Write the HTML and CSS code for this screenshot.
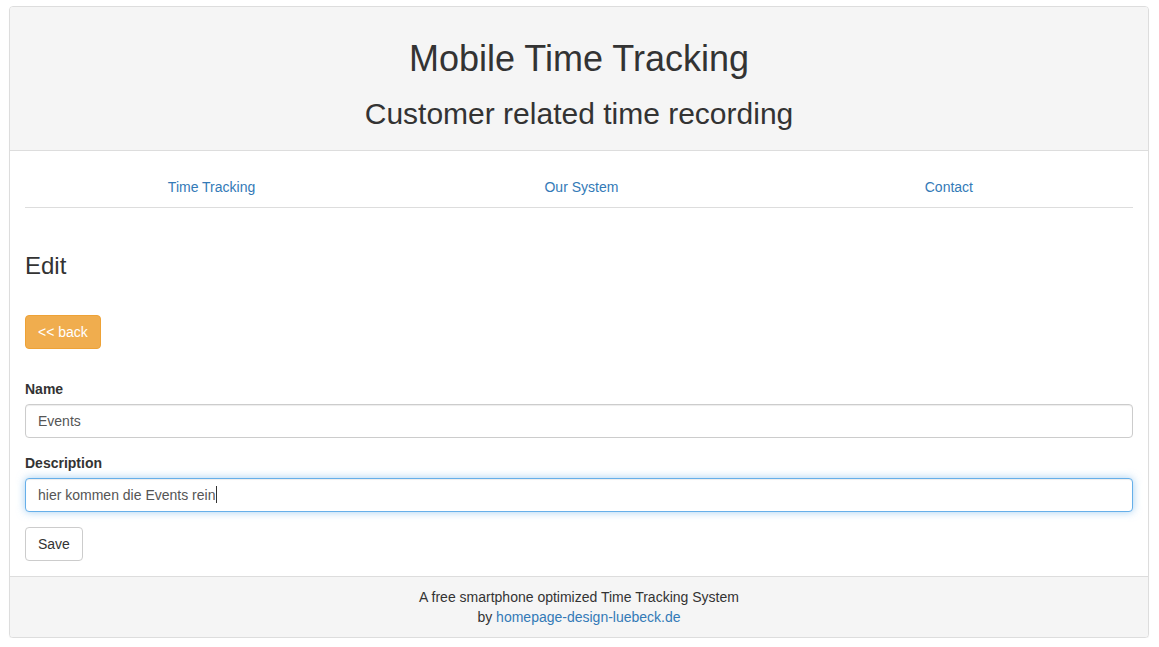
FILE: index.html
```html
<!DOCTYPE html>
<html lang="de">
<head>
<meta charset="utf-8">
<title>Mobile Time Tracking</title>
<link rel="stylesheet" href="styles.css">
</head>
<body>
<div class="page">
  <div class="panel">
    <div class="panel-heading">
      <h1 class="title">Mobile Time Tracking</h1>
      <h2 class="subtitle">Customer related time recording</h2>
    </div>
    <div class="panel-body">
      <ul class="nav">
        <li><a href="#">Time Tracking</a></li>
        <li><a href="#">Our System</a></li>
        <li><a href="#">Contact</a></li>
      </ul>
      <h3 class="section-title">Edit</h3>
      <div class="back-row"><a class="btn btn-warning" href="#">&lt;&lt; back</a></div>
      <form class="edit-form">
        <div class="form-group">
          <label class="label">Name</label>
          <div class="form-control">Events</div>
        </div>
        <div class="form-group">
          <label class="label">Description</label>
          <div class="form-control focused">hier kommen die Events rein<span class="cursor"></span></div>
        </div>
        <button type="button" class="btn btn-default">Save</button>
      </form>
    </div>
    <div class="panel-footer">
      A free smartphone optimized Time Tracking System<br>
      by <a href="#">homepage-design-luebeck.de</a>
    </div>
  </div>
</div>
</body>
</html>
```

FILE: styles.css
```css
* { box-sizing: border-box; }
html, body { margin: 0; padding: 0; background: #fff; }
body {
  font-family: "Liberation Sans", Arial, Helvetica, sans-serif;
  font-size: 14px;
  line-height: 20px;
  color: #333;
}
a { color: #337ab7; text-decoration: none; }

.page { padding: 6px 10px 0 9px; }

.panel {
  border: 1px solid #ddd;
  border-radius: 4px;
  background: #fff;
  box-shadow: 0 1px 1px rgba(0,0,0,.05);
}

.panel-heading {
  background: #f5f5f5;
  border-bottom: 1px solid #ddd;
  border-radius: 3px 3px 0 0;
  padding: 10px 15px;
  text-align: center;
}
.title {
  font-size: 36px;
  font-weight: 500;
  line-height: 1.1;
  margin: 22px 0 10px;
}
.subtitle {
  font-size: 30px;
  font-weight: 500;
  line-height: 1.1;
  margin: 18px 0 10px;
}

.panel-body { padding: 15px; }

.nav {
  display: table;
  width: 100%;
  list-style: none;
  margin: 0;
  padding: 0;
}
.nav li {
  display: table-cell;
  width: 1%;
  text-align: center;
}
.nav li a {
  display: block;
  padding: 11px 15px 10px;
  border-bottom: 1px solid #ddd;
  border-radius: 4px 4px 0 0;
}

.section-title {
  font-size: 24px;
  font-weight: 500;
  line-height: 1.1;
  margin: 45px 0 10px;
}

.back-row { margin: 36px 0 30px; }

.btn {
  display: inline-block;
  padding: 6px 12px;
  font-family: inherit;
  font-size: 14px;
  line-height: 20px;
  border: 1px solid transparent;
  border-radius: 4px;
  text-align: center;
  cursor: pointer;
}
.btn-warning {
  color: #fff;
  background: #f0ad4e;
  border-color: #eea236;
}
.btn-default {
  color: #333;
  background: #fff;
  border-color: #ccc;
}

.edit-form { margin: 0; }
.form-group { margin-bottom: 15px; }
.label {
  display: block;
  font-weight: bold;
  margin-bottom: 5px;
}
.form-control {
  display: block;
  width: 100%;
  height: 34px;
  padding: 6px 12px;
  color: #555;
  background: #fff;
  border: 1px solid #ccc;
  border-radius: 4px;
  box-shadow: inset 0 1px 1px rgba(0,0,0,.075);
}
.form-control.focused {
  border-color: #66afe9;
  box-shadow: inset 0 1px 1px rgba(0,0,0,.075), 0 0 8px rgba(102,175,233,.6);
}
.cursor {
  display: inline-block;
  width: 1px;
  height: 17px;
  background: #333;
  vertical-align: -3px;
  margin-left: 1px;
}

.panel-footer {
  background: #f5f5f5;
  border-top: 1px solid #ddd;
  border-radius: 0 0 3px 3px;
  padding: 10px 15px;
  text-align: center;
}
```
